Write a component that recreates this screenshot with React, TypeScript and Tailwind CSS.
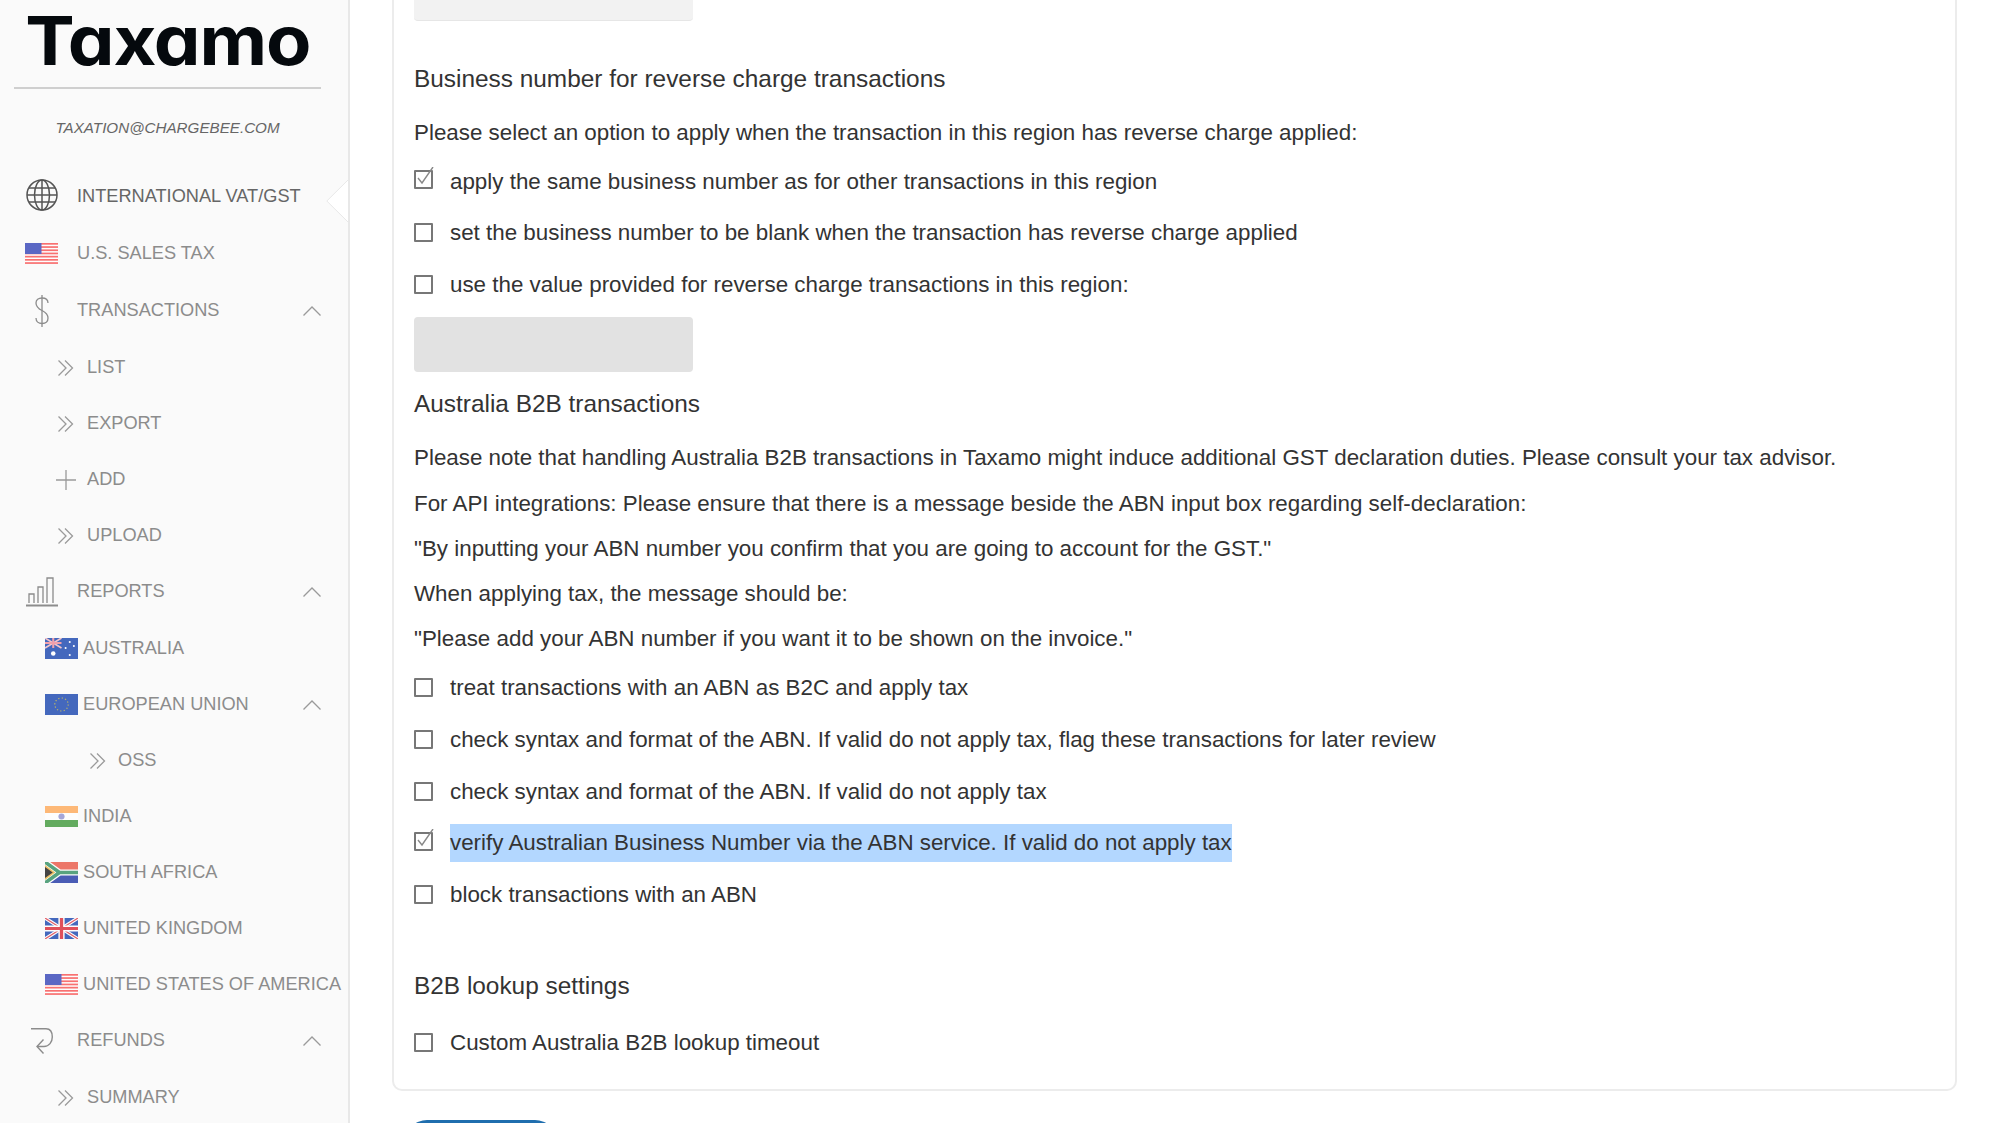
import React from 'react';

const DoubleChevron = () => (
  <svg width="18" height="18" viewBox="0 0 18 18" fill="none" stroke="#9a9a9a" strokeWidth="1.3">
    <path d="M1.5 1.5 L9 9 L1.5 16.5" />
    <path d="M8 1.5 L15.5 9 L8 16.5" />
  </svg>
);

const PlusIcon = () => (
  <svg width="20" height="20" viewBox="0 0 20 20" fill="none" stroke="#9a9a9a" strokeWidth="1.3">
    <path d="M10 0 V20 M0 10 H20" />
  </svg>
);

const ChevronUp = () => (
  <svg width="18" height="10" viewBox="0 0 18 10" fill="none" stroke="#9a9a9a" strokeWidth="1.3">
    <path d="M0.5 9.5 L9 1 L17.5 9.5" />
  </svg>
);

const GlobeIcon = () => (
  <svg className="mb-[3px]" width="32" height="32" viewBox="0 0 32 32" fill="none" stroke="#555" strokeWidth="1.5">
    <circle cx="16" cy="16" r="15" />
    <ellipse cx="16" cy="16" rx="7.5" ry="15" />
    <path d="M16 1 V31 M3 9 H29 M1 16 H31 M3 23 H29" />
  </svg>
);

const DollarIcon = () => (
  <svg width="14" height="32" viewBox="0 0 14 32" fill="none" stroke="#8c8c8c" strokeWidth="1.3">
    <path d="M13 8 C13 4.5 10.5 3 7 3 C3.5 3 1 5 1 8 C1 12 4 14 7 15.5 C10 17 13 19 13 23 C13 26.5 10.5 28.5 7 28.5 C3.5 28.5 1 26.5 1 23" />
    <path d="M7 0 V32" />
  </svg>
);

const ChartIcon = () => (
  <svg width="32" height="30" viewBox="0 0 32 30" fill="none" stroke="#8c8c8c" strokeWidth="1.3">
    <path d="M3 26 V17 H8 V26 M12 26 V10 H17 V26 M21 26 V1 H27 V26" />
    <path d="M0 28.5 H32" strokeWidth="2" />
  </svg>
);

const RefundIcon = () => (
  <svg width="22" height="26" viewBox="0 0 22 26" fill="none" stroke="#8c8c8c" strokeWidth="1.4">
    <path d="M0 0.7 H15 C19 0.7 21.3 4 21.3 9 C21.3 14 18 18.5 13 18.5 H6" />
    <path d="M12.5 11.5 L6 18.5 L12.5 25.5" />
  </svg>
);

const UsFlag = () => (
  <svg width="33" height="21" viewBox="0 0 32 21" preserveAspectRatio="none">
    <rect width="32" height="21" fill="#fdfdfd" />
    {[0, 3.2, 6.4, 9.6, 12.8, 16, 19.2].map((y) => (
      <rect key={y} y={y} width="32" height="1.7" fill="#f87171" />
    ))}
    <rect width="16" height="11" fill="#5a67c4" />
  </svg>
);

const AuFlag = () => (
  <svg width="33" height="21" viewBox="0 0 32 21" preserveAspectRatio="none">
    <rect width="32" height="21" fill="#4468bd" />
    <path d="M0 0 L16 10 M16 0 L0 10" stroke="#f3c4cb" strokeWidth="1.6" />
    <path d="M8 0 V10 M0 5 H16" stroke="#f2a0ab" strokeWidth="2" />
    <circle cx="8" cy="15.5" r="2.2" fill="#fff" />
    <circle cx="24" cy="4" r="1" fill="#fff" />
    <circle cx="24" cy="17" r="1" fill="#fff" />
    <circle cx="20" cy="10" r="1" fill="#fff" />
    <circle cx="28" cy="8" r="1" fill="#fff" />
  </svg>
);

const EuFlag = () => (
  <svg width="33" height="21" viewBox="0 0 32 21" preserveAspectRatio="none">
    <rect width="32" height="21" fill="#4468bd" />
    <circle cx="16" cy="10.5" r="6.5" fill="none" stroke="#b8b46a" strokeWidth="1.2" strokeDasharray="1.2 2.2" />
  </svg>
);

const InFlag = () => (
  <svg width="33" height="21" viewBox="0 0 32 21" preserveAspectRatio="none">
    <rect width="32" height="7" fill="#fdb877" />
    <rect y="7" width="32" height="7" fill="#fdfdfd" />
    <rect y="14" width="32" height="7" fill="#63ab5f" />
    <circle cx="16" cy="10.5" r="3" fill="#a5a6d8" />
  </svg>
);

const ZaFlag = () => (
  <svg width="33" height="21" viewBox="0 0 32 21" preserveAspectRatio="none">
    <rect width="32" height="10.5" fill="#ec7668" />
    <rect y="10.5" width="32" height="10.5" fill="#4a5cb5" />
    <path d="M0 0 L14 10.5 L0 21 Z" fill="#58a37f" />
    <path d="M0 0 L14 10.5 H32 M0 21 L14 10.5" stroke="#fdfdfd" strokeWidth="6" fill="none" />
    <path d="M0 0 L14 10.5 H32 M0 21 L14 10.5" stroke="#58a37f" strokeWidth="3.5" fill="none" />
    <path d="M0 3 L10 10.5 L0 18 Z" fill="#eec266" />
    <path d="M0 5 L7.5 10.5 L0 16 Z" fill="#444" />
  </svg>
);

const UkFlag = () => (
  <svg width="33" height="21" viewBox="0 0 32 21" preserveAspectRatio="none">
    <rect width="32" height="21" fill="#4468bd" />
    <path d="M0 0 L32 21 M32 0 L0 21" stroke="#fdfdfd" strokeWidth="3.5" />
    <path d="M0 0 L32 21 M32 0 L0 21" stroke="#e0606a" strokeWidth="1.2" />
    <path d="M16 0 V21 M0 10.5 H32" stroke="#fdfdfd" strokeWidth="6" />
    <path d="M16 0 V21 M0 10.5 H32" stroke="#e0505a" strokeWidth="3.2" />
  </svg>
);

type NavRow = {
  label: string;
  icon: React.ReactNode;
  kind: 'main' | 'sub' | 'flag' | 'deep';
  chevron?: boolean;
  active?: boolean;
};

const navRows: NavRow[] = [
  { label: 'INTERNATIONAL VAT/GST', icon: <GlobeIcon />, kind: 'main', active: true },
  { label: 'U.S. SALES TAX', icon: <UsFlag />, kind: 'main' },
  { label: 'TRANSACTIONS', icon: <DollarIcon />, kind: 'main', chevron: true },
  { label: 'LIST', icon: <DoubleChevron />, kind: 'sub' },
  { label: 'EXPORT', icon: <DoubleChevron />, kind: 'sub' },
  { label: 'ADD', icon: <PlusIcon />, kind: 'sub' },
  { label: 'UPLOAD', icon: <DoubleChevron />, kind: 'sub' },
  { label: 'REPORTS', icon: <ChartIcon />, kind: 'main', chevron: true },
  { label: 'AUSTRALIA', icon: <AuFlag />, kind: 'flag' },
  { label: 'EUROPEAN UNION', icon: <EuFlag />, kind: 'flag', chevron: true },
  { label: 'OSS', icon: <DoubleChevron />, kind: 'deep' },
  { label: 'INDIA', icon: <InFlag />, kind: 'flag' },
  { label: 'SOUTH AFRICA', icon: <ZaFlag />, kind: 'flag' },
  { label: 'UNITED KINGDOM', icon: <UkFlag />, kind: 'flag' },
  { label: 'UNITED STATES OF AMERICA', icon: <UsFlag />, kind: 'flag' },
  { label: 'REFUNDS', icon: <RefundIcon />, kind: 'main', chevron: true },
  { label: 'SUMMARY', icon: <DoubleChevron />, kind: 'sub' },
];

const Sidebar = () => (
  <aside className="relative w-[350px] shrink-0 h-full bg-[#fafafa] border-r-2 border-[#e8e8e8] overflow-hidden">
    <div className="h-[89px] ml-[14px] w-[307px] border-b-2 border-[#cfcfcf] flex justify-center">
      <span className="scale-x-[1.09] text-[68px] leading-[80px] font-bold text-[#05090d] tracking-[-1px] font-['Inter',sans-serif] [font-feature-settings:'cv11']">
        Taxamo
      </span>
    </div>
    <div className="h-[78px] ml-[14px] w-[307px] flex items-center justify-center text-[15.2px] italic text-[#666] whitespace-nowrap">
      TAXATION@CHARGEBEE.COM
    </div>
    <nav className="mt-[1px] text-[18.2px]">
      {navRows.map((row) => (
        <div key={row.label} className={`flex items-center pr-[27px] ${row.kind === 'main' ? 'h-[57px]' : 'h-[56px] pt-[1px]'}`}>
          {row.kind === 'main' && (
            <>
              <span className="ml-[25px] w-[33px] flex justify-center shrink-0">{row.icon}</span>
              <span className={`ml-[19px] flex-1 ${row.active ? 'text-[#666]' : 'text-[#8c8c8c]'}`}>{row.label}</span>
            </>
          )}
          {row.kind === 'sub' && (
            <>
              <span className="ml-[56px] w-[20px] flex justify-center shrink-0">{row.icon}</span>
              <span className="ml-[11px] flex-1 text-[#8c8c8c]">{row.label}</span>
            </>
          )}
          {row.kind === 'flag' && (
            <>
              <span className="ml-[45px] w-[33px] shrink-0">{row.icon}</span>
              <span className="ml-[5px] flex-1 text-[#8c8c8c] whitespace-nowrap">{row.label}</span>
            </>
          )}
          {row.kind === 'deep' && (
            <>
              <span className="ml-[88px] w-[20px] flex justify-center shrink-0">{row.icon}</span>
              <span className="ml-[10px] flex-1 text-[#8c8c8c]">{row.label}</span>
            </>
          )}
          {row.chevron && <ChevronUp />}
        </div>
      ))}
    </nav>
    {/* notch pointing at the active item */}
    <svg className="absolute right-[-2px] top-[177px]" width="24" height="48" viewBox="0 0 24 48">
      <path d="M24 1 L0.8 24 L24 47 Z" fill="#fff" stroke="#e8e8e8" strokeWidth="1" />
    </svg>
  </aside>
);

const Checkbox = ({ checked }: { checked?: boolean }) => (
  <span className={`relative w-[19px] h-[19px] shrink-0 border-2 border-[#777] rounded-[1px] bg-white ${checked ? '-translate-y-[1px]' : ''}`}>
    {checked && (
      <svg className="absolute -left-[2px] -top-[5px]" width="22" height="24" viewBox="0 0 22 24" fill="none" stroke="#888" strokeWidth="1.4">
        <path d="M4 11 L8 16 L19 0" />
      </svg>
    )}
  </span>
);

const Option = ({ label, checked, selected }: { label: string; checked?: boolean; selected?: boolean }) => (
  <div className="h-[51.8px] flex items-center">
    <Checkbox checked={checked} />
    <span className={`ml-[17px] ${selected ? 'bg-[#b3d7ff] leading-[38px]' : 'pt-[1px]'}`}>{label}</span>
  </div>
);

const Heading = ({ children, className = '' }: { children: React.ReactNode; className?: string }) => (
  <h3 className={`h-[40px] pt-[2px] flex items-center text-[24.4px] text-[#333] ${className}`}>{children}</h3>
);

const Para = ({ children }: { children: React.ReactNode }) => (
  <p className="h-[45.25px] flex items-center">{children}</p>
);

const GreyInput = ({ className = '' }: { className?: string }) => (
  <div className={`w-[279px] rounded-[4px] ${className}`} />
);

export default function App() {
  return (
    <div className="flex h-[1123px] overflow-hidden bg-white text-[22.36px] text-[#333] font-['Liberation_Sans',Arial,sans-serif]">
      <Sidebar />
      <main className="flex-1 min-w-0 pl-[42px] pr-[42px]">
        <section className="border-2 border-t-0 border-[#ececec] rounded-b-[10px] pl-[20px] pr-[20px] pb-[21px]">
          <GreyInput className="h-[21px] bg-[#f2f2f2] rounded-t-none border-b border-[#e6e6e6]" />
          <Heading className="mt-[37px]">Business number for reverse charge transactions</Heading>
          <p className="h-[45px] mt-[12px] flex items-center">Please select an option to apply when the transaction in this region has reverse charge applied:</p>
          <Option checked label="apply the same business number as for other transactions in this region" />
          <Option label="set the business number to be blank when the transaction has reverse charge applied" />
          <Option label="use the value provided for reverse charge transactions in this region:" />
          <GreyInput className="h-[55px] mt-[7px] bg-[#e2e2e2]" />
          <Heading className="mt-[11px]">Australia B2B transactions</Heading>
          <div className="mt-[12px]">
            <Para>Please note that handling Australia B2B transactions in Taxamo might induce additional GST declaration duties. Please consult your tax advisor.</Para>
            <Para>For API integrations: Please ensure that there is a message beside the ABN input box regarding self-declaration:</Para>
            <Para>"By inputting your ABN number you confirm that you are going to account for the GST."</Para>
            <Para>When applying tax, the message should be:</Para>
            <Para>"Please add your ABN number if you want it to be shown on the invoice."</Para>
          </div>
          <Option label="treat transactions with an ABN as B2C and apply tax" />
          <Option label="check syntax and format of the ABN. If valid do not apply tax, flag these transactions for later review" />
          <Option label="check syntax and format of the ABN. If valid do not apply tax" />
          <Option checked selected label="verify Australian Business Number via the ABN service. If valid do not apply tax" />
          <Option label="block transactions with an ABN" />
          <Heading className="mt-[45px]">B2B lookup settings</Heading>
          <div className="mt-[11px]">
            <Option label="Custom Australia B2B lookup timeout" />
          </div>
        </section>
        <button className="block mt-[29px] ml-[13px] w-[152px] h-[44px] rounded-full bg-[#1f6eae]" />
      </main>
    </div>
  );
}
